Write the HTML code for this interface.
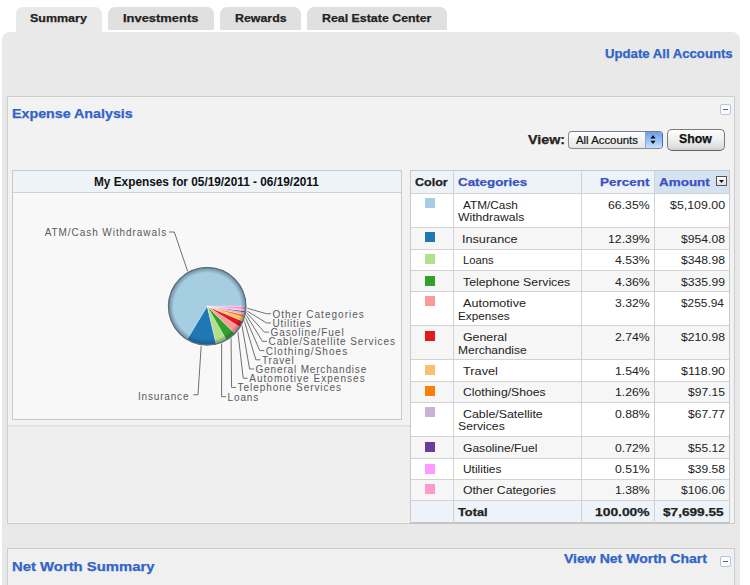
<!DOCTYPE html>
<html><head><meta charset="utf-8"><style>
html,body{margin:0;padding:0;background:#fff;width:750px;height:585px;overflow:hidden;position:relative;font-family:"Liberation Sans",sans-serif}
.a{position:absolute;box-sizing:border-box}
.t{position:absolute;white-space:pre;transform-origin:0 0}
</style></head><body>
<div class="a" style="left:16px;top:7px;width:86px;height:30px;background:#e9e9e9;border-radius:7px 7px 0 0"></div>
<div class="a" style="left:108px;top:7px;width:106px;height:23px;background:#e0e0e0;border-radius:7px 7px 0 0"></div>
<div class="a" style="left:220px;top:7px;width:81px;height:23px;background:#e0e0e0;border-radius:7px 7px 0 0"></div>
<div class="a" style="left:307px;top:7px;width:140px;height:23px;background:#e0e0e0;border-radius:7px 7px 0 0"></div>
<div class="a" style="left:2px;top:32px;width:738px;height:560px;background:#e9e9e9;border-radius:8px 8px 0 0"></div>
<div class="a" style="left:7px;top:96px;width:728px;height:428px;background:#f2f2f2;border:1px solid #cdcdcd"></div>
<div class="a" style="left:720px;top:104px;width:11px;height:11px;background:#fbfbfb;border:1px solid #b2c7de;border-radius:2px"></div>
<div class="a" style="left:723px;top:109px;width:5px;height:1px;background:#666"></div>
<!-- select -->
<div class="a" style="left:568px;top:131px;width:95px;height:18px;border:1px solid #8a8a8a;border-right-color:#5b5fa8;border-top-color:#7a7a9a;border-radius:4px;background:linear-gradient(#fdfdfd,#e6e6e6);overflow:hidden">
  <div class="a" style="left:76px;top:0;width:18px;height:16px;background:linear-gradient(#6a9ee8,#a9cdf8 70%,#c6e2ff);border-left:1px solid #8aa8d8"></div>
</div>
<svg class="a" style="left:645px;top:131px" width="18" height="18"><path d="M8,4 L10.6,7.4 L5.4,7.4 Z M8,13 L10.6,9.8 L5.4,9.8 Z" fill="#111"/></svg>
<!-- show -->
<div class="a" style="left:667px;top:129px;width:58px;height:22px;border:1px solid #7a7a7a;border-bottom-color:#666;border-radius:5px;background:linear-gradient(#fdfdfd,#f0f0f0 45%,#e2e2e2 80%,#cfcfcf)"></div>
<!-- chart box -->
<div class="a" style="left:8px;top:427px;width:402px;height:95px;background:#efefef"></div>
<div class="a" style="left:8px;top:425px;width:402px;height:2px;background:#e2e2e2"></div>
<div class="a" style="left:12px;top:170px;width:390px;height:250px;background:#f8f8f8;border:1px solid #c9c9c9"></div>
<div class="a" style="left:13px;top:171px;width:388px;height:22px;background:#eef3f8;border-bottom:1px solid #cfd3d7"></div>
<!-- table -->
<div class="a" style="left:410px;top:170px;width:320px;height:354px;background:#fff;border:1px solid #c9c9c9;border-bottom:2px solid #c5c5c5"></div>
<div class="a" style="left:411px;top:171px;width:318px;height:22px;background:#eef3f9"></div>
<div class="a" style="left:655px;top:171px;width:74px;height:22px;background:#d5e3f0"></div>
<div class="a" style="left:411px;top:194px;width:318px;height:34px;background:#ffffff"></div><div class="a" style="left:425px;top:198px;width:10px;height:10px;background:#a6cee3"></div><div class="a" style="left:411px;top:228px;width:318px;height:22px;background:#f6f6f6"></div><div class="a" style="left:425px;top:232px;width:10px;height:10px;background:#1f78b4"></div><div class="a" style="left:411px;top:250px;width:318px;height:21px;background:#ffffff"></div><div class="a" style="left:425px;top:254px;width:10px;height:10px;background:#b2df8a"></div><div class="a" style="left:411px;top:271px;width:318px;height:21px;background:#f6f6f6"></div><div class="a" style="left:425px;top:276px;width:10px;height:10px;background:#33a02c"></div><div class="a" style="left:411px;top:292px;width:318px;height:34px;background:#ffffff"></div><div class="a" style="left:425px;top:296px;width:10px;height:10px;background:#fb9a99"></div><div class="a" style="left:411px;top:326px;width:318px;height:34px;background:#f6f6f6"></div><div class="a" style="left:425px;top:331px;width:10px;height:10px;background:#e31a1c"></div><div class="a" style="left:411px;top:360px;width:318px;height:22px;background:#ffffff"></div><div class="a" style="left:425px;top:365px;width:10px;height:10px;background:#fdbf6f"></div><div class="a" style="left:411px;top:382px;width:318px;height:21px;background:#f6f6f6"></div><div class="a" style="left:425px;top:386px;width:10px;height:10px;background:#ff7f00"></div><div class="a" style="left:411px;top:403px;width:318px;height:34px;background:#ffffff"></div><div class="a" style="left:425px;top:407px;width:10px;height:10px;background:#cab2d6"></div><div class="a" style="left:411px;top:437px;width:318px;height:22px;background:#f6f6f6"></div><div class="a" style="left:425px;top:442px;width:10px;height:10px;background:#6a3d9a"></div><div class="a" style="left:411px;top:459px;width:318px;height:21px;background:#ffffff"></div><div class="a" style="left:425px;top:464px;width:10px;height:10px;background:#ff99ff"></div><div class="a" style="left:411px;top:480px;width:318px;height:21px;background:#f6f6f6"></div><div class="a" style="left:425px;top:484px;width:10px;height:10px;background:#ff99cc"></div><div class="a" style="left:411px;top:227px;width:318px;height:1px;background:#d2d2d2"></div><div class="a" style="left:411px;top:249px;width:318px;height:1px;background:#d2d2d2"></div><div class="a" style="left:411px;top:270px;width:318px;height:1px;background:#d2d2d2"></div><div class="a" style="left:411px;top:291px;width:318px;height:1px;background:#d2d2d2"></div><div class="a" style="left:411px;top:325px;width:318px;height:1px;background:#d2d2d2"></div><div class="a" style="left:411px;top:359px;width:318px;height:1px;background:#d2d2d2"></div><div class="a" style="left:411px;top:381px;width:318px;height:1px;background:#d2d2d2"></div><div class="a" style="left:411px;top:402px;width:318px;height:1px;background:#d2d2d2"></div><div class="a" style="left:411px;top:436px;width:318px;height:1px;background:#d2d2d2"></div><div class="a" style="left:411px;top:458px;width:318px;height:1px;background:#d2d2d2"></div><div class="a" style="left:411px;top:479px;width:318px;height:1px;background:#d2d2d2"></div><div class="a" style="left:411px;top:500px;width:318px;height:1px;background:#d2d2d2"></div><div class="a" style="left:453px;top:171px;width:1px;height:352px;background:#d2d2d2"></div><div class="a" style="left:581px;top:171px;width:1px;height:352px;background:#d2d2d2"></div><div class="a" style="left:654px;top:171px;width:1px;height:352px;background:#d2d2d2"></div>
<div class="a" style="left:411px;top:501px;width:318px;height:21px;background:#eef3f9"></div>
<div class="a" style="left:411px;top:500px;width:318px;height:1px;background:#d2d2d2"></div>
<div class="a" style="left:411px;top:193px;width:318px;height:1px;background:#d2d2d2"></div>
<div class="a" style="left:453px;top:501px;width:1px;height:21px;background:#d2d2d2"></div>
<div class="a" style="left:581px;top:501px;width:1px;height:21px;background:#d2d2d2"></div>
<div class="a" style="left:654px;top:501px;width:1px;height:21px;background:#d2d2d2"></div>
<div class="a" style="left:716px;top:176px;width:11px;height:10px;border:1px solid #555;background:linear-gradient(#fff,#e0e0e0)"></div>
<svg class="a" style="left:716px;top:176px" width="11" height="10"><path d="M3,4 L8,4 L5.5,7 Z" fill="#111"/></svg>
<!-- net worth -->
<div class="a" style="left:7px;top:548px;width:728px;height:60px;background:#f0f0f0;border:1px solid #cdcdcd"></div>
<div class="a" style="left:720px;top:556px;width:11px;height:11px;background:#fbfbfb;border:1px solid #b2c7de;border-radius:2px"></div>
<div class="a" style="left:723px;top:561px;width:5px;height:1px;background:#666"></div>
<svg class="a" style="left:0;top:0" width="750" height="585">
<defs><radialGradient id="rim" cx="0.5" cy="0.5" r="0.5"><stop offset="0.86" stop-color="#000" stop-opacity="0"/><stop offset="1" stop-color="#2a3f4a" stop-opacity="0.42"/></radialGradient></defs>
<g fill="none" stroke="#707070" stroke-width="1"><polyline points="188.02,272.34 174.30,232.00 169.00,232.00" /><polyline points="201.24,344.84 198.00,394.80 193.20,394.80" /><polyline points="246.16,307.99 266.40,313.70 270.90,313.70" /><polyline points="245.99,310.30 266.40,322.92 270.90,322.92" /><polyline points="245.81,311.80 264.40,332.14 268.90,332.14" /><polyline points="245.49,313.73 262.50,341.36 267.00,341.36" /><polyline points="244.90,316.29 259.80,350.58 264.30,350.58" /><polyline points="243.88,319.56 255.90,359.80 260.40,359.80" /><polyline points="241.77,324.36 249.60,369.02 254.10,369.02" /><polyline points="237.73,330.57 243.20,378.24 247.70,378.24" /><polyline points="231.04,337.17 231.60,387.46 236.10,387.46" /><polyline points="221.61,342.54 221.60,396.68 226.10,396.68" /></g>
<path d="M207.20,306.30 L246.20,306.30 A39,39 0 1 0 187.06,339.70 Z" fill="#a6cee3" stroke="#fff" stroke-opacity="0.55" stroke-width="0.6"/><path d="M207.20,306.30 L187.06,339.70 A39,39 0 0 0 216.32,344.22 Z" fill="#1f78b4" stroke="#fff" stroke-opacity="0.55" stroke-width="0.6"/><path d="M207.20,306.30 L216.32,344.22 A39,39 0 0 0 226.60,340.13 Z" fill="#b2df8a" stroke="#fff" stroke-opacity="0.55" stroke-width="0.6"/><path d="M207.20,306.30 L226.60,340.13 A39,39 0 0 0 235.03,333.62 Z" fill="#33a02c" stroke="#fff" stroke-opacity="0.55" stroke-width="0.6"/><path d="M207.20,306.30 L235.03,333.62 A39,39 0 0 0 240.09,327.26 Z" fill="#fb9a99" stroke="#fff" stroke-opacity="0.55" stroke-width="0.6"/><path d="M207.20,306.30 L240.09,327.26 A39,39 0 0 0 243.19,321.32 Z" fill="#e31a1c" stroke="#fff" stroke-opacity="0.55" stroke-width="0.6"/><path d="M207.20,306.30 L243.19,321.32 A39,39 0 0 0 244.48,317.77 Z" fill="#fdbf6f" stroke="#fff" stroke-opacity="0.55" stroke-width="0.6"/><path d="M207.20,306.30 L244.48,317.77 A39,39 0 0 0 245.27,314.79 Z" fill="#ff7f00" stroke="#fff" stroke-opacity="0.55" stroke-width="0.6"/><path d="M207.20,306.30 L245.27,314.79 A39,39 0 0 0 245.68,312.67 Z" fill="#cab2d6" stroke="#fff" stroke-opacity="0.55" stroke-width="0.6"/><path d="M207.20,306.30 L245.68,312.67 A39,39 0 0 0 245.93,310.92 Z" fill="#6a3d9a" stroke="#fff" stroke-opacity="0.55" stroke-width="0.6"/><path d="M207.20,306.30 L245.93,310.92 A39,39 0 0 0 246.05,309.68 Z" fill="#ff99ff" stroke="#fff" stroke-opacity="0.55" stroke-width="0.6"/><path d="M207.20,306.30 L246.05,309.68 A39,39 0 0 0 246.20,306.30 Z" fill="#ff99cc" stroke="#fff" stroke-opacity="0.55" stroke-width="0.6"/>
<circle cx="207.2" cy="306.3" r="39" fill="url(#rim)"/>
<circle cx="207.2" cy="306.3" r="38.7" fill="none" stroke="#5c7380" stroke-width="1.5"/>
<circle cx="207.2" cy="306.3" r="40.1" fill="none" stroke="#ffffff" stroke-opacity="0.6" stroke-width="1"/>
</svg>
<div class="t" style="left:30.00px;transform:scaleX(1.0846);top:12px;height:12px;line-height:12px;font-size:11.5px;font-weight:bold;-webkit-text-stroke:0.25px;color:#222;letter-spacing:0.000px">Summary</div><div class="t" style="left:123.00px;transform:scaleX(1.1242);top:12px;height:12px;line-height:12px;font-size:11.5px;font-weight:bold;-webkit-text-stroke:0.25px;color:#222;letter-spacing:0.000px">Investments</div><div class="t" style="left:234.80px;transform:scaleX(1.0770);top:12px;height:12px;line-height:12px;font-size:11.5px;font-weight:bold;-webkit-text-stroke:0.25px;color:#222;letter-spacing:0.000px">Rewards</div><div class="t" style="left:322.00px;transform:scaleX(1.0769);top:12px;height:12px;line-height:12px;font-size:11.5px;font-weight:bold;-webkit-text-stroke:0.25px;color:#222;letter-spacing:0.000px">Real Estate Center</div><div class="t" style="left:605.00px;transform:scaleX(1.0963);top:47px;height:14px;line-height:14px;font-size:12px;font-weight:bold;-webkit-text-stroke:0.25px;color:#3163c9;letter-spacing:0.000px">Update All Accounts</div><div class="t" style="left:12.40px;transform:scaleX(1.0967);top:106px;height:15px;line-height:15px;font-size:13px;font-weight:bold;-webkit-text-stroke:0.25px;color:#3163c9;letter-spacing:0.000px">Expense Analysis</div><div class="t" style="left:527.60px;transform:scaleX(1.1915);top:133px;height:14px;line-height:14px;font-size:12px;font-weight:bold;-webkit-text-stroke:0.25px;color:#222;letter-spacing:0.000px">View:</div><div class="t" style="left:576.00px;transform:scaleX(1.0323);top:134px;height:12px;line-height:12px;font-size:11px;-webkit-text-stroke:0.2px;color:#111;letter-spacing:-0.000px">All Accounts</div><div class="t" style="left:679.00px;transform:scaleX(1.0225);top:132px;height:14px;line-height:14px;font-size:12px;font-weight:bold;-webkit-text-stroke:0.25px;color:#111;letter-spacing:0.000px">Show</div><div class="t" style="left:93.60px;transform:scaleX(0.9852);top:175px;height:14px;line-height:14px;font-size:12px;font-weight:bold;color:#111;letter-spacing:0.000px">My Expenses for 05/19/2011 - 06/19/2011</div><div class="t" style="left:415.00px;transform:scaleX(1.0900);top:176px;height:12px;line-height:12px;font-size:11.5px;font-weight:bold;-webkit-text-stroke:0.25px;color:#222;letter-spacing:0.000px">Color</div><div class="t" style="left:457.80px;transform:scaleX(1.1636);top:176px;height:12px;line-height:12px;font-size:11.5px;font-weight:bold;-webkit-text-stroke:0.25px;color:#3b51c2;letter-spacing:0.000px">Categories</div><div class="t" style="left:600.30px;transform:scaleX(1.1733);top:176px;height:12px;line-height:12px;font-size:11.5px;font-weight:bold;-webkit-text-stroke:0.25px;color:#3b51c2;letter-spacing:0.000px">Percent</div><div class="t" style="left:659.00px;transform:scaleX(1.1696);top:176px;height:12px;line-height:12px;font-size:11.5px;font-weight:bold;-webkit-text-stroke:0.25px;color:#3b51c2;letter-spacing:-0.000px">Amount</div><div class="t" style="left:12.30px;transform:scaleX(1.1427);top:559px;height:15px;line-height:15px;font-size:13px;font-weight:bold;-webkit-text-stroke:0.25px;color:#3163c9;letter-spacing:0.000px">Net Worth Summary</div><div class="t" style="left:564.00px;transform:scaleX(1.1698);top:552px;height:14px;line-height:14px;font-size:12px;font-weight:bold;-webkit-text-stroke:0.25px;color:#3163c9;letter-spacing:0.000px">View Net Worth Chart</div><div class="t" style="left:44.70px;top:227px;height:11px;line-height:11px;font-size:10px;color:#5a5a5a;letter-spacing:0.935px">ATM/Cash Withdrawals</div><div class="t" style="left:138.00px;top:391px;height:11px;line-height:11px;font-size:10px;color:#5a5a5a;letter-spacing:0.818px">Insurance</div><div class="t" style="left:272.40px;top:309px;height:11px;line-height:11px;font-size:10px;color:#5a5a5a;letter-spacing:1.017px">Other Categories</div><div class="t" style="left:272.40px;top:318px;height:11px;line-height:11px;font-size:10px;color:#5a5a5a;letter-spacing:0.797px">Utilities</div><div class="t" style="left:270.40px;top:327px;height:11px;line-height:11px;font-size:10px;color:#5a5a5a;letter-spacing:0.960px">Gasoline/Fuel</div><div class="t" style="left:268.50px;top:336px;height:11px;line-height:11px;font-size:10px;color:#5a5a5a;letter-spacing:0.904px">Cable/Satellite Services</div><div class="t" style="left:265.80px;top:346px;height:11px;line-height:11px;font-size:10px;color:#5a5a5a;letter-spacing:1.044px">Clothing/Shoes</div><div class="t" style="left:261.90px;top:355px;height:11px;line-height:11px;font-size:10px;color:#5a5a5a;letter-spacing:0.882px">Travel</div><div class="t" style="left:255.60px;top:364px;height:11px;line-height:11px;font-size:10px;color:#5a5a5a;letter-spacing:0.836px">General Merchandise</div><div class="t" style="left:249.20px;top:373px;height:11px;line-height:11px;font-size:10px;color:#5a5a5a;letter-spacing:1.043px">Automotive Expenses</div><div class="t" style="left:237.60px;top:382px;height:11px;line-height:11px;font-size:10px;color:#5a5a5a;letter-spacing:0.949px">Telephone Services</div><div class="t" style="left:227.60px;top:392px;height:11px;line-height:11px;font-size:10px;color:#5a5a5a;letter-spacing:0.863px">Loans</div><div class="t" style="left:462.70px;transform:scaleX(1.0270);top:199px;height:12px;line-height:12px;font-size:11.5px;color:#222;letter-spacing:0.000px">ATM/Cash</div><div class="t" style="left:457.80px;transform:scaleX(1.0576);top:211px;height:12px;line-height:12px;font-size:11.5px;color:#222;letter-spacing:0.000px">Withdrawals</div><div class="t" style="left:461.90px;transform:scaleX(1.0996);top:233px;height:12px;line-height:12px;font-size:11.5px;color:#222;letter-spacing:0.000px">Insurance</div><div class="t" style="left:463.00px;transform:scaleX(0.9784);top:254px;height:12px;line-height:12px;font-size:11.5px;color:#222;letter-spacing:0.000px">Loans</div><div class="t" style="left:463.00px;transform:scaleX(1.0684);top:276px;height:12px;line-height:12px;font-size:11.5px;color:#222;letter-spacing:0.000px">Telephone Services</div><div class="t" style="left:462.50px;transform:scaleX(1.0940);top:297px;height:12px;line-height:12px;font-size:11.5px;color:#222;letter-spacing:-0.000px">Automotive</div><div class="t" style="left:457.80px;transform:scaleX(1.0206);top:310px;height:12px;line-height:12px;font-size:11.5px;color:#222;letter-spacing:0.000px">Expenses</div><div class="t" style="left:462.50px;transform:scaleX(1.0729);top:331px;height:12px;line-height:12px;font-size:11.5px;color:#222;letter-spacing:0.000px">General</div><div class="t" style="left:457.80px;transform:scaleX(1.0437);top:344px;height:12px;line-height:12px;font-size:11.5px;color:#222;letter-spacing:0.000px">Merchandise</div><div class="t" style="left:462.50px;transform:scaleX(1.1076);top:365px;height:12px;line-height:12px;font-size:11.5px;color:#222;letter-spacing:0.000px">Travel</div><div class="t" style="left:462.50px;transform:scaleX(1.0582);top:386px;height:12px;line-height:12px;font-size:11.5px;color:#222;letter-spacing:0.000px">Clothing/Shoes</div><div class="t" style="left:462.90px;transform:scaleX(1.0751);top:408px;height:12px;line-height:12px;font-size:11.5px;color:#222;letter-spacing:0.000px">Cable/Satellite</div><div class="t" style="left:457.60px;transform:scaleX(1.0598);top:420px;height:12px;line-height:12px;font-size:11.5px;color:#222;letter-spacing:0.000px">Services</div><div class="t" style="left:462.90px;transform:scaleX(1.0497);top:442px;height:12px;line-height:12px;font-size:11.5px;color:#222;letter-spacing:0.000px">Gasoline/Fuel</div><div class="t" style="left:462.90px;transform:scaleX(1.0372);top:463px;height:12px;line-height:12px;font-size:11.5px;color:#222;letter-spacing:0.000px">Utilities</div><div class="t" style="left:462.90px;transform:scaleX(1.0590);top:484px;height:12px;line-height:12px;font-size:11.5px;color:#222;letter-spacing:0.000px">Other Categories</div><div class="t" style="left:457.60px;transform:scaleX(1.1127);top:506px;height:12px;line-height:12px;font-size:11.5px;font-weight:bold;-webkit-text-stroke:0.25px;color:#222;letter-spacing:0.000px">Total</div><div class="t" style="left:607.58px;transform:scaleX(1.0682);top:199px;height:12px;line-height:12px;font-size:11.5px;color:#222;letter-spacing:0.000px">66.35%</div><div class="t" style="left:669.92px;transform:scaleX(1.0752);top:199px;height:12px;line-height:12px;font-size:11.5px;color:#222;letter-spacing:-0.000px">$5,109.00</div><div class="t" style="left:607.58px;transform:scaleX(1.0682);top:233px;height:12px;line-height:12px;font-size:11.5px;color:#222;letter-spacing:0.000px">12.39%</div><div class="t" style="left:680.92px;transform:scaleX(1.0584);top:233px;height:12px;line-height:12px;font-size:11.5px;color:#222;letter-spacing:0.000px">$954.08</div><div class="t" style="left:614.57px;transform:scaleX(1.0632);top:254px;height:12px;line-height:12px;font-size:11.5px;color:#222;letter-spacing:0.000px">4.53%</div><div class="t" style="left:680.92px;transform:scaleX(1.0584);top:254px;height:12px;line-height:12px;font-size:11.5px;color:#222;letter-spacing:0.000px">$348.98</div><div class="t" style="left:614.57px;transform:scaleX(1.0632);top:276px;height:12px;line-height:12px;font-size:11.5px;color:#222;letter-spacing:0.000px">4.36%</div><div class="t" style="left:680.92px;transform:scaleX(1.0584);top:276px;height:12px;line-height:12px;font-size:11.5px;color:#222;letter-spacing:0.000px">$335.99</div><div class="t" style="left:614.57px;transform:scaleX(1.0632);top:297px;height:12px;line-height:12px;font-size:11.5px;color:#222;letter-spacing:0.000px">3.32%</div><div class="t" style="left:680.92px;transform:scaleX(1.0333);top:297px;height:12px;line-height:12px;font-size:11.5px;color:#222;letter-spacing:0.000px">$255.94</div><div class="t" style="left:614.57px;transform:scaleX(1.0632);top:331px;height:12px;line-height:12px;font-size:11.5px;color:#222;letter-spacing:0.000px">2.74%</div><div class="t" style="left:680.92px;transform:scaleX(1.0584);top:331px;height:12px;line-height:12px;font-size:11.5px;color:#222;letter-spacing:0.000px">$210.98</div><div class="t" style="left:614.57px;transform:scaleX(1.0632);top:365px;height:12px;line-height:12px;font-size:11.5px;color:#222;letter-spacing:0.000px">1.54%</div><div class="t" style="left:680.92px;transform:scaleX(1.0808);top:365px;height:12px;line-height:12px;font-size:11.5px;color:#222;letter-spacing:0.000px">$118.90</div><div class="t" style="left:614.57px;transform:scaleX(1.0632);top:386px;height:12px;line-height:12px;font-size:11.5px;color:#222;letter-spacing:0.000px">1.26%</div><div class="t" style="left:687.92px;transform:scaleX(1.0519);top:386px;height:12px;line-height:12px;font-size:11.5px;color:#222;letter-spacing:0.000px">$97.15</div><div class="t" style="left:614.57px;transform:scaleX(1.0632);top:408px;height:12px;line-height:12px;font-size:11.5px;color:#222;letter-spacing:0.000px">0.88%</div><div class="t" style="left:687.92px;transform:scaleX(1.0519);top:408px;height:12px;line-height:12px;font-size:11.5px;color:#222;letter-spacing:0.000px">$67.77</div><div class="t" style="left:614.57px;transform:scaleX(1.0632);top:442px;height:12px;line-height:12px;font-size:11.5px;color:#222;letter-spacing:0.000px">0.72%</div><div class="t" style="left:687.92px;transform:scaleX(1.0519);top:442px;height:12px;line-height:12px;font-size:11.5px;color:#222;letter-spacing:0.000px">$55.12</div><div class="t" style="left:614.57px;transform:scaleX(1.0632);top:463px;height:12px;line-height:12px;font-size:11.5px;color:#222;letter-spacing:0.000px">0.51%</div><div class="t" style="left:687.92px;transform:scaleX(1.0519);top:463px;height:12px;line-height:12px;font-size:11.5px;color:#222;letter-spacing:0.000px">$39.58</div><div class="t" style="left:614.57px;transform:scaleX(1.0632);top:484px;height:12px;line-height:12px;font-size:11.5px;color:#222;letter-spacing:0.000px">1.38%</div><div class="t" style="left:680.92px;transform:scaleX(1.0584);top:484px;height:12px;line-height:12px;font-size:11.5px;color:#222;letter-spacing:0.000px">$106.06</div><div class="t" style="left:594.70px;transform:scaleX(1.2020);top:506px;height:12px;line-height:12px;font-size:11.5px;font-weight:bold;-webkit-text-stroke:0.25px;color:#222;letter-spacing:0.000px">100.00%</div><div class="t" style="left:663.00px;transform:scaleX(1.1842);top:506px;height:12px;line-height:12px;font-size:11.5px;font-weight:bold;-webkit-text-stroke:0.25px;color:#222;letter-spacing:0.000px">$7,699.55</div>
</body></html>
